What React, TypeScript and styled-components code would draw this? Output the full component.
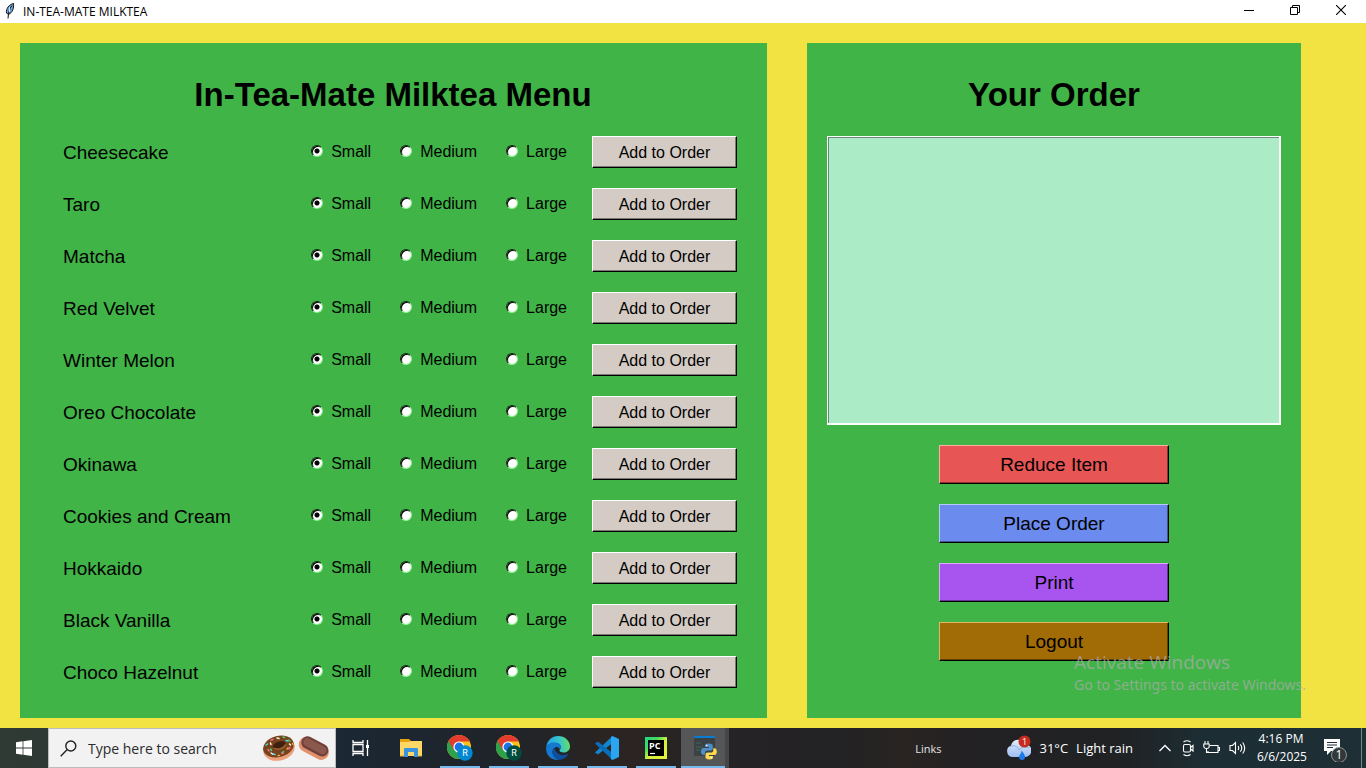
import React, { useState } from "react";
import styled, { createGlobalStyle, css } from "styled-components";

const GlobalStyle = createGlobalStyle`
  *, *::before, *::after { box-sizing: border-box; }
  body { margin: 0; background: #f2e342; color: #000; }
  button, input, select { font: inherit; }
`;

const uiFont = `"Open Sans", "Noto Sans", sans-serif`;

const Screen = styled.div`
  position: relative;
  display: flex;
  flex-direction: column;
  min-height: 100vh;
  font-family: "Liberation Sans", Arial, sans-serif;
`;

/* ---------- window title bar ---------- */

const TitleBar = styled.header`
  display: flex;
  align-items: flex-start;
  height: 23px;
  padding: 0 2px 0 4px;
  background: #fff;
  font-family: ${uiFont};
  font-size: 12px;
`;

const WindowTitle = styled.span`
  flex: 1;
  margin-left: 7px;
  line-height: 23px;
`;

const WindowButton = styled.button`
  display: grid;
  place-items: center;
  width: 46px;
  height: 20px;
  padding: 0;
  border: 0;
  background: transparent;
`;

/* ---------- panels ---------- */

const Desk = styled.main`
  flex: 1;
  display: grid;
  grid-template-columns: 747fr 494fr;
  gap: 40px;
  padding: 20px 65px 10px 20px;
  background: #f2e342;
`;

const Panel = styled.section`
  display: flex;
  flex-direction: column;
  padding: 32px 20px 30px;
  background: #40b447;
`;

const MenuPanel = styled(Panel)`
  padding-left: 43px;
  padding-right: 30px;
`;

const PanelTitle = styled.h1<{ $shift?: boolean }>`
  margin: 0 0 21px;
  ${(p) => p.$shift && css`margin-right: 14px;`}
  font-size: 33px;
  line-height: 40px;
  text-align: center;
`;

const DrinkList = styled.div`
  display: flex;
  flex-direction: column;
  gap: 20px;
`;

const DrinkRow = styled.fieldset`
  display: flex;
  align-items: center;
  gap: 25px;
  min-width: 0;
  margin: 0;
  padding: 0;
  border: 0;
`;

const DrinkName = styled.span`
  flex: 1;
  padding-top: 2px;
  font-size: 19px;
  line-height: 30px;
`;

const Sizes = styled.div`
  display: flex;
  gap: 29px;
  font-size: 16px;
  line-height: 32px;
`;

const SizeLabel = styled.label`
  display: flex;
  align-items: center;
  gap: 8px;
`;

const Radio = styled.input`
  appearance: none;
  width: 12px;
  height: 12px;
  margin: 0 0 2px;
  border: 1px solid;
  border-color: #0b2a0d #8ff08f #8ff08f #0b2a0d;
  border-radius: 50%;
  background: #fff;
  box-shadow: inset 1px 1px 0 #000;
  &:checked {
    background: radial-gradient(circle at 5px 5px, #000 2px, #fff 3px);
  }
`;

const BevelButton = styled.button<{ $face: string; $light: string; $dark: string }>`
  padding: 0;
  border: 1px solid;
  border-color: ${(p) => p.$light} #000 #000 ${(p) => p.$light};
  background: ${(p) => p.$face};
  box-shadow: inset -1px -1px 0 ${(p) => p.$dark};
  color: #000;
`;

const AddButton = styled(BevelButton)`
  width: 145px;
  height: 32px;
  padding-top: 2px;
  font-size: 16px;
`;

const OrderList = styled.div`
  height: 289px;
  border: 2px solid #fff;
  border-width: 1px 2px 2px 1px;
  background: #abebc6;
  box-shadow: inset 1px 1px 0 #66897a;
`;

const Actions = styled.div`
  display: flex;
  flex-direction: column;
  align-items: center;
  gap: 20px;
  margin-top: 20px;
`;

const ActionButton = styled(BevelButton)`
  width: 230px;
  height: 39px;
  font-size: 19px;
`;

const Watermark = styled.aside`
  position: absolute;
  right: 60px;
  bottom: 73px;
  color: rgba(178, 170, 178, 0.7);
  font-family: "Noto Sans", sans-serif;
  font-size: 14px;
  line-height: 20px;
  pointer-events: none;
`;

const WatermarkTitle = styled.div`
  font-family: ${uiFont};
  font-size: 19px;
  line-height: 25px;
`;

/* ---------- taskbar ---------- */

const Taskbar = styled.footer`
  display: flex;
  align-items: stretch;
  height: 40px;
  background: linear-gradient(90deg, #303a34 0, #1b2733 26%, #202429 37%, #2b2422 45%, #252326 54%, #232224 62%, #292422 66%, #222124 72%, #202224 82%, #1c2d33 88%, #1e2f36 100%);
  color: #fff;
  font-family: ${uiFont};
`;

const TaskButton = styled.button<{ $running?: boolean; $active?: boolean; $w?: number }>`
  display: grid;
  place-items: center;
  width: ${(p) => p.$w ?? 49}px;
  padding: 0;
  border: 0;
  background: transparent;
  ${(p) =>
    p.$running &&
    css`
      background: linear-gradient(#76b9ed, #76b9ed) center bottom / 40px 2px no-repeat;
    `}
  ${(p) =>
    p.$active &&
    css`
      margin-left: 1px;
      padding-left: 4px;
      border-right: 4px solid #454647;
      background: linear-gradient(#76b9ed, #76b9ed) center bottom / 100% 2px no-repeat, #555657;
    `}
`;

const SearchBox = styled.label`
  display: flex;
  align-items: center;
  gap: 2px;
  width: 288px;
  padding: 0 5px 0 11px;
  border: 1px solid #bcbcbc;
  background: #f2f2f2;
`;

const SearchInput = styled.input`
  flex: 1;
  min-width: 0;
  margin-left: 9px;
  padding: 0;
  border: 0;
  outline: 0;
  background: transparent;
  color: #2b2b2b;
  font-size: 14px;
  &::placeholder { color: #2b2b2b; opacity: 1; }
`;

const Tray = styled.div`
  display: flex;
  align-items: center;
  margin-left: auto;
`;

const LinksLabel = styled.button`
  margin-right: 65px;
  padding: 0;
  border: 0;
  background: transparent;
  color: #e4e4e4;
  font-size: 11px;
`;

const Weather = styled.button`
  display: flex;
  align-items: center;
  gap: 8px;
  margin-right: 25px;
  padding: 0;
  border: 0;
  background: transparent;
  color: #fff;
  font-size: 13px;
  white-space: nowrap;
`;

const TrayIcons = styled.div`
  display: flex;
  align-items: center;
  gap: 9px;
  margin-right: 11px;
`;

const Clock = styled.time`
  width: 48px;
  font-size: 12px;
  line-height: 18px;
  text-align: center;
  white-space: nowrap;
`;

const Notifications = styled.button`
  display: grid;
  place-items: center;
  width: 57px;
  height: 40px;
  padding: 0 0 0 6px;
  border: 0;
  border-right: 1px solid #7b868a;
  margin-right: 4px;
  background: transparent;
`;

/* ---------- icons ---------- */

const Feather = () => (
  <svg width="12" height="20" viewBox="0 0 12 20" aria-hidden="true">
    <path d="M9.500 3.500C5 4.500 2 8.500 2.500 13l2 1.500c4-2 5.500-6 5-11z" fill="#6fa3d8" stroke="#111" strokeWidth="1" />
    <path d="M8 5.500C5 9 4.500 13 4 18.500" fill="none" stroke="#111" strokeWidth="1" />
    <path d="M5.500 7v5" stroke="#c9e0f5" strokeWidth="1" />
  </svg>
);

const Start = () => (
  <svg width="16" height="16" viewBox="0 0 16 16" fill="#fff" aria-hidden="true">
    <path d="M0 2.200 6.600 1.300v6.200H0zM7.400 1.200 16 0v7.500H7.400zM0 8.400h6.600v6.300L0 13.800zM7.400 8.400H16V16l-8.600-1.200z" />
  </svg>
);

const Search = () => (
  <svg width="17" height="17" viewBox="0 0 17 17" fill="none" stroke="#222" strokeWidth="1.4" aria-hidden="true">
    <circle cx="10.8" cy="6" r="5" />
    <path d="M7 9.800.7 16.200" />
  </svg>
);

const Donut = () => (
  <svg width="34" height="28" viewBox="0 0 34 28" aria-hidden="true">
    <ellipse cx="17" cy="15" rx="16" ry="11.500" fill="#eda07b" transform="rotate(-14 17 15)" />
    <ellipse cx="16.600" cy="12.400" rx="15.600" ry="10.600" fill="#76431f" transform="rotate(-14 17 13)" />
    <ellipse cx="17.500" cy="11" rx="6.500" ry="3.200" fill="#3e1f10" transform="rotate(-18 17 12)" />
    <path d="M12 14c3 2.500 9 1 12-3.500" fill="none" stroke="#a0622f" strokeWidth="1.400" />
    <g strokeWidth="1.500" strokeLinecap="round">
      <path d="m4 11 1.500-1m5.500 10 2 .5m11-14 2 .5" stroke="#55d6e8" />
      <path d="m9 6 2-.5m-5 10 1 1.500m20-2 1-1.500m-8 6 1.500-.5" stroke="#ff668c" />
      <path d="m15 4 2 .5m-8 6-.5-1.500m19 1 1 1m-18 9-1.500-1" stroke="#fff3d6" />
      <path d="m21 3 1.500.5m-2.500 15 1.500-1m-12-1-1-1.500m18-9 1.500 1" stroke="#51c972" />
      <path d="m25 15 1-1m-10 7.500h1.500m13-12 .5 1" stroke="#f7a23b" />
    </g>
  </svg>
);

const Eclair = () => (
  <svg width="32" height="26" viewBox="0 0 32 26" aria-hidden="true">
    <g transform="rotate(28 16 13)">
      <rect x="0" y="6" width="32" height="15" rx="7.500" fill="#e2916d" />
      <rect x="1.500" y="5" width="29" height="12.500" rx="6.200" fill="#72403a" />
      <rect x="3.500" y="7" width="25" height="8" rx="4" fill="#8b584d" />
    </g>
  </svg>
);

const TaskView = () => (
  <svg width="18" height="18" viewBox="0 0 18 18" fill="none" stroke="#fff" strokeWidth="1.300" aria-hidden="true">
    <path d="M1 1v2.500h10V1M1 17v-2.500h10V17M1 5.500h10v7H1zM15.500 1v16" />
    <path d="M14 6h3v3h-3z" fill="#fff" stroke="none" />
  </svg>
);

const Explorer = () => (
  <svg width="22" height="20" viewBox="0 0 22 20" aria-hidden="true">
    <path d="M0 1h9l2 2h11v5H0z" fill="#e8a20c" />
    <path d="M0 4h9l2-1h11v15H0z" fill="#ffd767" />
    <path d="M4 19v-8q0-1 1-1h12q1 0 1 1v8h-4v-5H8v5z" fill="#3a93dd" />
    <path d="M0 18h4m14 0h4" stroke="#e5ad2e" strokeWidth="1" />
  </svg>
);

const Chrome = ({ badge }: { badge: string }) => (
  <svg width="26" height="26" viewBox="0 0 26 26" aria-hidden="true">
    <circle cx="12" cy="12" r="12" fill="#fbc116" />
    <path d="M12 12 1.600 6A12 12 0 0 0 12 24l5.200-9z" fill="#2da14c" />
    <path d="M12 0A12 12 0 0 0 1.600 6l5.200 9L12 6.600h10.700A12 12 0 0 0 12 0z" fill="#e33b2e" />
    <circle cx="12" cy="12" r="5.600" fill="#fff" />
    <circle cx="12" cy="12" r="4.400" fill="#1a73e8" />
    <circle cx="18" cy="18" r="7.700" fill={badge} />
    <text x="18" y="21" fill="#fff" fontSize="9" textAnchor="middle" fontFamily="Roboto, sans-serif">R</text>
  </svg>
);

const Edge = () => (
  <svg width="24" height="24" viewBox="0 0 24 24" aria-hidden="true">
    <defs>
      <linearGradient id="edgeTop" x1="0" y1="0.5" x2="1" y2="0.4">
        <stop offset="0" stopColor="#239fe2" />
        <stop offset="0.55" stopColor="#35c3d0" />
        <stop offset="1" stopColor="#66df61" />
      </linearGradient>
    </defs>
    <path d="M.2 11C1 4.500 6 0 12 0c7 0 12 5 12 10.500 0 3.500-2.800 6-6 6-3 0-4.500-1-4.500-2s1.300-1.500 1.300-3.500C14.800 8.500 12 7 9 7 4.500 7 .5 9.500.2 11z" fill="url(#edgeTop)" />
    <path d="M.1 12C.5 8.500 4.500 6.500 8.500 6.500c4 0 6.300 2.300 6.300 4.500 0 1.500-1 2-1 3 0-2-1.500-3-3-3-2.500 0-4.300 2.500-4.300 5 0 4 3.500 7 6.500 7.900C6 24.500-.5 19.500.1 12z" fill="#1479d2" />
    <path d="M8.500 12c-1.300 1-2 2.500-2 4.300 0 4.200 3.700 7.400 7.500 7.500 3.500-.3 6.500-2.300 8.300-5.200.3-.5-.2-.8-.6-.5C17 20.500 9.500 18.500 8.500 12z" fill="#0d4f9e" />
  </svg>
);

const VsCode = () => (
  <svg width="24" height="24" viewBox="0 0 24 24" aria-hidden="true">
    <path d="M17.500 0v7L3 18.500 0 16.500z" fill="#1484cc" />
    <path d="M0 7.500 3 5.500 17.500 17v7z" fill="#0a6db8" />
    <path d="M17.500 0 24 3v18l-6.500 3-1.500-1V1z" fill="#2ba5ef" />
  </svg>
);

const PyCharm = () => (
  <svg width="22" height="22" viewBox="0 0 22 22" aria-hidden="true">
    <defs>
      <linearGradient id="pyc" x1="0" y1="0" x2="1" y2="1">
        <stop offset="0" stopColor="#21d789" />
        <stop offset="0.3" stopColor="#44dc60" />
        <stop offset="0.55" stopColor="#d6f03e" />
        <stop offset="1" stopColor="#e8f23c" />
      </linearGradient>
    </defs>
    <rect width="22" height="22" fill="url(#pyc)" />
    <rect x="3" y="3" width="16" height="16" fill="#000" />
    <text x="4" y="12" fill="#fff" fontSize="9" fontWeight="700" fontFamily="Open Sans, sans-serif">PC</text>
    <path d="M5 16.500h5" stroke="#fff" strokeWidth="1.200" />
  </svg>
);

const PythonApp = () => (
  <svg width="24" height="24" viewBox="0 0 24 24" aria-hidden="true">
    <path d="M1 1h21v19H1z" fill="#3b4145" />
    <path d="M1 0h21v2H1z" fill="#0b7bd0" />
    <path d="M3 7h5m-5 4h7m-7 3h4" stroke="#3d6c4d" strokeWidth="1" />
    <path d="M15.500 7.500c-3 0-3.500 1-3.500 2.200V11h4v1h-5.600C9 12 8 13.200 8 15.400s1 3.400 2.300 3.400H12v-2c0-1.500 1-2.300 2.500-2.300h3.300c1.200 0 2-.8 2-2V9.700c0-1.200-1.300-2.200-4.300-2.200z" fill="#4f8fc8" />
    <path d="M16.500 23.500c3 0 3.500-1 3.500-2.200V20h-4v-1h5.600c1.400 0 2.200-1.200 2.200-3.400s-1-3.400-2.300-3.400H20.300v2c0 1.500-1 2.300-2.500 2.300h-3.300c-1.200 0-2 .8-2 2v2.800c0 1.200 1 2.200 4 2.200z" fill="#fcd94e" />
    <circle cx="13.700" cy="9.500" r=".8" fill="#fff" />
    <circle cx="18.300" cy="21.500" r=".8" fill="#fff" />
  </svg>
);

const RainCloud = () => (
  <svg width="25" height="26" viewBox="0 0 25 26" aria-hidden="true">
    <defs>
      <linearGradient id="cloud" x1="0" y1="0" x2="0" y2="1">
        <stop offset="0" stopColor="#e4eefc" />
        <stop offset="1" stopColor="#9dbdf0" />
      </linearGradient>
    </defs>
    <path d="M6 22a6 6 0 0 1-1-11.500A7.500 7.500 0 0 1 19 9a6.500 6.500 0 0 1 0 13z" fill="url(#cloud)" />
    <path d="M4 12c4-3 8 0 9 3 2-3 6-4 10-2" fill="none" stroke="#8badde" strokeWidth="1" />
    <path d="M15.500 15.500c2 2.500 3.500 4.500 3.500 6.500a3 3 0 0 1-6 0c0-2 2.500-3 2.500-6.500z" fill="#1c7bea" />
    <circle cx="18.500" cy="6.500" r="6" fill="#c72b20" />
    <text x="18.500" y="10" fill="#fff" fontSize="9" textAnchor="middle" fontFamily="Open Sans, sans-serif">1</text>
  </svg>
);

const trayStroke = { fill: "none", stroke: "#fff", strokeWidth: 1.1, "aria-hidden": true } as const;

const Chevron = () => (
  <svg width="14" height="16" viewBox="0 0 14 16" {...trayStroke}>
    <path d="m1.500 11 5.500-5.500 5.500 5.500" strokeWidth="1.300" />
  </svg>
);

const MeetNow = () => (
  <svg width="13" height="18" viewBox="0 0 13 18" {...trayStroke}>
    <rect x="2.500" y="5.500" width="7" height="7.500" rx="1.500" />
    <path d="m9.500 8.500 2.500-2v5.500l-2.500-2M2.500 3Q6 .5 9.500 3M2.500 15.500Q6 18 9.500 15.500" />
  </svg>
);

const Battery = () => (
  <svg width="17" height="16" viewBox="0 0 17 16" {...trayStroke}>
    <path d="M7 5.500h8v7H5V11M15 7.500h1.500v3H15M2 1v3M5 1v3M.8 4h5.400v2.500Q6 8.500 3.500 8.500T.8 6.500zM3.500 8.500v4H5" />
  </svg>
);

const Volume = () => (
  <svg width="17" height="16" viewBox="0 0 17 16" {...trayStroke}>
    <path d="M1 5.500h2.500L6.500 2.500v11L3.500 10.500H1zM9 6q1.500 2 0 4M11.300 4.300q3 3.700 0 7.400M13.700 2.500q4 5.500 0 11" />
  </svg>
);

const ActionCenter = () => (
  <svg width="26" height="28" viewBox="0 0 26 28" aria-hidden="true">
    <path d="M1 5h16v12H8l-4 4v-4H1z" fill="#fff" />
    <path d="M4 8.500h10M4 11h10M4 13.500h6" stroke="#1e2f36" strokeWidth="1" />
    <circle cx="16" cy="21" r="7.500" fill="#33383b" stroke="#8d9295" />
    <text x="16" y="25" fill="#fff" fontSize="12" textAnchor="middle" fontFamily="Open Sans, sans-serif">1</text>
  </svg>
);

/* ---------- data ---------- */

const drinks = [
  "Cheesecake",
  "Taro",
  "Matcha",
  "Red Velvet",
  "Winter Melon",
  "Oreo Chocolate",
  "Okinawa",
  "Cookies and Cream",
  "Hokkaido",
  "Black Vanilla",
  "Choco Hazelnut",
];
const sizes = ["Small", "Medium", "Large"];

const actions = [
  { label: "Reduce Item", face: "#e85555", light: "#ffb0a0", dark: "#8b3333" },
  { label: "Place Order", face: "#6b8bee", light: "#b5c8ff", dark: "#40548f" },
  { label: "Print", face: "#a855f0", light: "#dcaaff", dark: "#653390" },
  { label: "Logout", face: "#a16b06", light: "#e5b565", dark: "#614004" },
];

function Drink({ name }: { name: string }) {
  const [size, setSize] = useState("Small");
  return (
    <DrinkRow aria-label={name}>
      <DrinkName>{name}</DrinkName>
      <Sizes>
        {sizes.map((s) => (
          <SizeLabel key={s}>
            <Radio type="radio" name={name} checked={size === s} onChange={() => setSize(s)} />
            {s}
          </SizeLabel>
        ))}
      </Sizes>
      <AddButton type="button" $face="#d4cbc4" $light="#fff" $dark="#7d7873">
        Add to Order
      </AddButton>
    </DrinkRow>
  );
}

export default function App() {
  return (
    <Screen>
      <GlobalStyle />
      <TitleBar>
        <Feather />
        <WindowTitle>IN-TEA-MATE MILKTEA</WindowTitle>
        <WindowButton aria-label="Minimize">
          <svg width="10" height="10" viewBox="0 0 10 10"><path d="M0 5.500h10" stroke="#000" /></svg>
        </WindowButton>
        <WindowButton aria-label="Restore">
          <svg width="10" height="10" viewBox="0 0 10 10" fill="none" stroke="#000">
            <path d="M.5 2.500h7v7h-7zM2.500 2.500v-2h7v7h-2" />
          </svg>
        </WindowButton>
        <WindowButton aria-label="Close">
          <svg width="10" height="10" viewBox="0 0 10 10" stroke="#000" strokeWidth="1.100"><path d="m0 0 10 10M10 0 0 10" /></svg>
        </WindowButton>
      </TitleBar>

      <Desk>
        <MenuPanel>
          <PanelTitle $shift>In-Tea-Mate Milktea Menu</PanelTitle>
          <DrinkList>
            {drinks.map((d) => (
              <Drink key={d} name={d} />
            ))}
          </DrinkList>
        </MenuPanel>
        <Panel>
          <PanelTitle>Your Order</PanelTitle>
          <OrderList role="listbox" aria-label="Your Order" tabIndex={0} />
          <Actions>
            {actions.map((a) => (
              <ActionButton key={a.label} type="button" $face={a.face} $light={a.light} $dark={a.dark}>
                {a.label}
              </ActionButton>
            ))}
          </Actions>
        </Panel>
      </Desk>

      <Taskbar>
        <TaskButton $w={48} aria-label="Start"><Start /></TaskButton>
        <SearchBox>
          <Search />
          <SearchInput type="text" placeholder="Type here to search" aria-label="Search" />
          <Donut />
          <Eclair />
        </SearchBox>
        <TaskButton $w={50} aria-label="Task View"><TaskView /></TaskButton>
        <TaskButton aria-label="File Explorer"><Explorer /></TaskButton>
        <TaskButton $running aria-label="Chrome"><Chrome badge="#0288d1" /></TaskButton>
        <TaskButton $running aria-label="Chrome, second profile"><Chrome badge="#004d40" /></TaskButton>
        <TaskButton $running aria-label="Edge"><Edge /></TaskButton>
        <TaskButton $running aria-label="Visual Studio Code"><VsCode /></TaskButton>
        <TaskButton $running aria-label="PyCharm"><PyCharm /></TaskButton>
        <TaskButton $active $w={48} aria-label="Python"><PythonApp /></TaskButton>
        <Tray>
          <LinksLabel>Links</LinksLabel>
          <Weather>
            <RainCloud />
            <span>31°C</span>
            <span>Light rain</span>
          </Weather>
          <TrayIcons>
            <Chevron />
            <MeetNow />
            <Battery />
            <Volume />
          </TrayIcons>
          <Clock>
            <div>4:16 PM</div>
            <div>6/6/2025</div>
          </Clock>
          <Notifications aria-label="Notifications"><ActionCenter /></Notifications>
        </Tray>
      </Taskbar>

      <Watermark>
        <WatermarkTitle>Activate Windows</WatermarkTitle>
        Go to Settings to activate Windows.
      </Watermark>
    </Screen>
  );
}
